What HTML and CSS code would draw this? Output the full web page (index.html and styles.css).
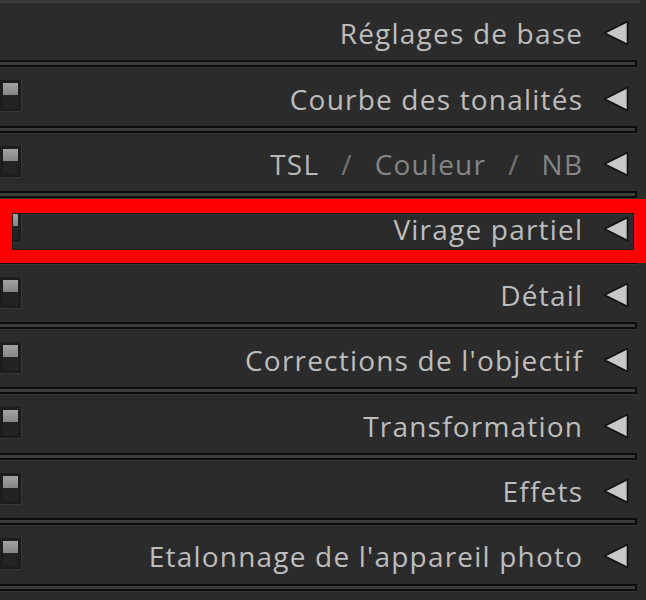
FILE: index.html
```html
<!DOCTYPE html>
<html lang="fr">
<head>
<meta charset="utf-8">
<title>Panneaux Développement</title>
<link rel="stylesheet" href="styles.css">
</head>
<body>
<div class="panel">
  <div class="top-edge"></div>

  <section class="section">
    <div class="header">
      <span class="title">Réglages de base</span>
      <svg class="arrow" viewBox="0 0 26 26"><polygon points="1.5,13 24.5,1.5 24.5,24.5"/></svg>
    </div>
    <div class="sep"></div>
  </section>

  <section class="section">
    <div class="header">
      <span class="switch"><span class="knob"></span></span>
      <span class="title">Courbe des tonalités</span>
      <svg class="arrow" viewBox="0 0 26 26"><polygon points="1.5,13 24.5,1.5 24.5,24.5"/></svg>
    </div>
    <div class="sep"></div>
  </section>

  <section class="section">
    <div class="header">
      <span class="switch"><span class="knob"></span></span>
      <span class="title"><span class="active">TSL</span><span class="slash">/</span><span class="dim">Couleur</span><span class="slash">/</span><span class="dim">NB</span></span>
      <svg class="arrow" viewBox="0 0 26 26"><polygon points="1.5,13 24.5,1.5 24.5,24.5"/></svg>
    </div>
    <div class="sep"></div>
  </section>

  <section class="section highlighted">
    <div class="header">
      <span class="switch"><span class="knob"></span></span>
      <span class="title">Virage partiel</span>
      <svg class="arrow" viewBox="0 0 26 26"><polygon points="1.5,13 24.5,1.5 24.5,24.5"/></svg>
    </div>
    <div class="sep"></div>
    <div class="annotation"></div>
  </section>

  <section class="section">
    <div class="header">
      <span class="switch"><span class="knob"></span></span>
      <span class="title">Détail</span>
      <svg class="arrow" viewBox="0 0 26 26"><polygon points="1.5,13 24.5,1.5 24.5,24.5"/></svg>
    </div>
    <div class="sep"></div>
  </section>

  <section class="section">
    <div class="header">
      <span class="switch"><span class="knob"></span></span>
      <span class="title">Corrections de l'objectif</span>
      <svg class="arrow" viewBox="0 0 26 26"><polygon points="1.5,13 24.5,1.5 24.5,24.5"/></svg>
    </div>
    <div class="sep"></div>
  </section>

  <section class="section">
    <div class="header">
      <span class="switch"><span class="knob"></span></span>
      <span class="title">Transformation</span>
      <svg class="arrow" viewBox="0 0 26 26"><polygon points="1.5,13 24.5,1.5 24.5,24.5"/></svg>
    </div>
    <div class="sep"></div>
  </section>

  <section class="section">
    <div class="header">
      <span class="switch"><span class="knob"></span></span>
      <span class="title">Effets</span>
      <svg class="arrow" viewBox="0 0 26 26"><polygon points="1.5,13 24.5,1.5 24.5,24.5"/></svg>
    </div>
    <div class="sep"></div>
  </section>

  <section class="section">
    <div class="header">
      <span class="switch"><span class="knob"></span></span>
      <span class="title">Etalonnage de l'appareil photo</span>
      <svg class="arrow" viewBox="0 0 26 26"><polygon points="1.5,13 24.5,1.5 24.5,24.5"/></svg>
    </div>
    <div class="sep"></div>
  </section>
</div>
</body>
</html>
```

FILE: styles.css
```css
html, body {
  margin: 0;
  padding: 0;
  background: #2b2b2b;
}

.panel {
  width: 646px;
  height: 600px;
  overflow: hidden;
  background: #2b2b2b;
  font-family: "Open Sans", "Noto Sans", sans-serif;
  color: #bdbdbd;
}

.top-edge {
  width: 640px;
  height: 3px;
  background: #3b3b3b;
}

.section {
  position: relative;
  display: flex;
  flex-direction: column;
}

.header {
  height: 57.4px;
  display: flex;
  align-items: center;
  box-sizing: border-box;
  padding-top: 3px;
}

.title {
  margin-left: auto;
  margin-right: -1.2px;
  font-size: 28px;
  letter-spacing: 1.2px;
  line-height: 32px;
  white-space: nowrap;
}

.active { color: #b8b8b8; }
.dim { color: #858585; }
.slash {
  color: #747474;
  margin: 0 22px;
}

.arrow {
  width: 26px;
  height: 26px;
  margin-left: 21px;
  margin-right: 17px;
  flex: none;
}
.arrow polygon {
  fill: #c8c8c8;
  stroke: #111;
  stroke-width: 1.6;
  stroke-linejoin: round;
}

.switch {
  flex: none;
  align-self: flex-start;
  margin-top: 9px;
  width: 21px;
  height: 31px;
  box-sizing: border-box;
  border: 3px solid #1d1d1d;
  background: #232323;
  box-shadow: 1px 0 0 #363636, 0 1px 0 #363636;
  display: flex;
  flex-direction: column;
}
.knob {
  height: 12px;
  background: linear-gradient(#a2a2a2, #858585);
}

.sep {
  width: 637px;
  height: 7px;
  box-sizing: border-box;
  background: #3c3c3c;
  border: 2px solid #0c0c0c;
  border-left: none;
  box-shadow: 0 1px 0 #363636;
  margin-bottom: 1px;
}

.annotation {
  position: absolute;
  left: 0;
  top: 0;
  width: 646px;
  height: 64px;
  box-sizing: border-box;
  border: 12px solid #ff0000;
  border-top-width: 14px;
  border-bottom-width: 13px;
  box-shadow: inset 0 0 0 1px #1b1b1b;
}
```
